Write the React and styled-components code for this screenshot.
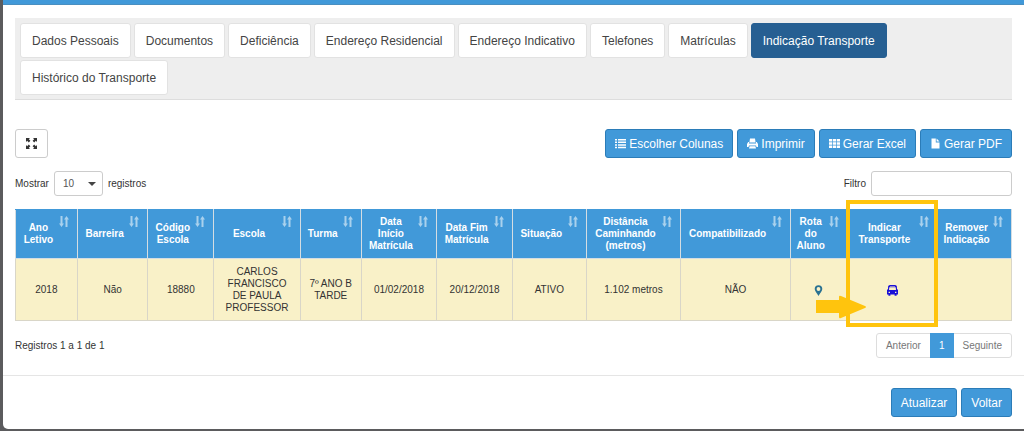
import React, { useState } from "react";
import styled, { createGlobalStyle } from "styled-components";

const GlobalStyle = createGlobalStyle`
  * {
    box-sizing: border-box;
  }

  body {
    margin: 0;
    background: #5b5b5d;
    color: #333;
    font-family: "Liberation Sans", Arial, sans-serif;
    font-size: 10px;
    line-height: 12px;
  }

  button, input, select {
    font-family: inherit;
  }
`;

const Page = styled.div`
  padding: 0 0 2px 3px;
`;

const Modal = styled.div`
  background: #fff;
  border-radius: 0 0 0 5px;
  overflow: hidden;
`;

const ModalHeader = styled.div`
  height: 5px;
  background: #4199d9;
  border-bottom: 1px solid #4a8fc0;
`;

const ModalBody = styled.div`
  padding: 13px 12px 17px;
`;

const ModalFooter = styled.div`
  display: flex;
  justify-content: flex-end;
  gap: 4px;
  padding: 12px;
  border-top: 1px solid #e5e5e5;
`;

const TabList = styled.nav`
  display: flex;
  flex-wrap: wrap;
  gap: 2px 3px;
  padding: 5px 5px 4px;
  margin-bottom: 29px;
  background: #eee;
  border-bottom: 1px solid #ddd;
`;

const Tab = styled.button`
  height: 35px;
  padding: 0 11px;
  border: 1px solid ${(props) => (props.$active ? "#265f92" : "#e2e2e2")};
  border-radius: 3px;
  background: ${(props) => (props.$active ? "#265f92" : "#fff")};
  color: ${(props) => (props.$active ? "#fff" : "#444")};
  font-size: 12px;
  white-space: nowrap;
  cursor: pointer;
`;

const Toolbar = styled.div`
  display: flex;
  align-items: center;
  justify-content: space-between;
  margin-bottom: 13px;
`;

const ButtonGroup = styled.div`
  display: flex;
  gap: 4px;
`;

const Button = styled.button`
  display: flex;
  align-items: center;
  gap: 3px;
  height: 29px;
  padding: 0 9px;
  border: 1px solid #2b7cb8;
  border-radius: 3px;
  background: #4199d9;
  color: #fff;
  font-size: 12px;
  white-space: nowrap;
  cursor: pointer;
`;

const ExpandButton = styled(Button)`
  padding: 0 10px;
  border-color: #ccc;
  background: #fff;
  color: #333;
`;

const Field = styled.label`
  display: flex;
  align-items: center;
  gap: 5px;
`;

const SelectBox = styled.span`
  display: grid;
  align-items: center;

  select, svg {
    grid-area: 1 / 1;
  }

  svg {
    justify-self: end;
    margin-right: 7px;
    pointer-events: none;
  }
`;

const Select = styled.select`
  width: 49px;
  height: 25px;
  padding: 0 8px;
  border: 1px solid #ccc;
  border-radius: 3px;
  background: #fff;
  color: #555;
  font-size: 10px;
  appearance: none;
`;

const FilterInput = styled.input`
  width: 141px;
  height: 25px;
  padding: 0 8px;
  border: 1px solid #ccc;
  border-radius: 3px;
  font-size: 10px;
`;

const TableArea = styled.div`
  position: relative;
  margin-bottom: 12px;
`;

const Table = styled.table`
  width: 100%;
  table-layout: fixed;
  border-collapse: collapse;
  text-align: center;
`;

const Th = styled.th`
  position: relative;
  width: ${(props) => props.$width}%;
  height: 49px;
  padding: 6px 21px 6px 5px;
  border: 1px solid #d5dde2;
  border-top-color: #4199d9;
  background: #4199d9;
  color: #fff;
  font-weight: bold;

  svg {
    position: absolute;
    top: 6px;
    right: 8px;
    opacity: 0.55;
  }
`;

const Td = styled.td`
  height: 62px;
  padding: 6px;
  border: 1px solid #d9d6c8;
  background: #f9f1c8;

  svg {
    vertical-align: middle;
  }
`;

const IconButton = styled.button`
  padding: 0;
  border: 0;
  background: none;
  color: ${(props) => props.$color};
  cursor: pointer;
`;

// destaque em volta da coluna "Indicar Transporte"
const Highlight = styled.div`
  position: absolute;
  top: -9px;
  bottom: -6px;
  left: 83.3%;
  width: 9.3%;
  border: 4px solid #ffc40d;
  pointer-events: none;

  svg {
    position: absolute;
    bottom: 4px;
    left: -34px;
  }
`;

const TableFooter = styled.div`
  display: flex;
  align-items: center;
  justify-content: space-between;
`;

const Pagination = styled.div`
  display: flex;
  border: 1px solid #ddd;
  border-radius: 3px;
`;

const PageButton = styled.button`
  height: 23px;
  padding: 0 9px;
  border: 0;
  background: ${(props) => (props.$active ? "#4199d9" : "transparent")};
  color: ${(props) => (props.$active ? "#fff" : "#777")};
  font-size: 10px;
  box-shadow: ${(props) => (props.$active ? "0 -1px #4199d9, 0 1px #4199d9" : "none")};
  cursor: pointer;
`;

const tabs = [
  "Dados Pessoais",
  "Documentos",
  "Deficiência",
  "Endereço Residencial",
  "Endereço Indicativo",
  "Telefones",
  "Matrículas",
  "Indicação Transporte",
  "Histórico do Transporte",
];

const columns = [
  { name: "Ano Letivo", width: 6.2 },
  { name: "Barreira", width: 7.1 },
  { name: "Código Escola", width: 6.6 },
  { name: "Escola", width: 8.7 },
  { name: "Turma", width: 6.1 },
  { name: "Data Início Matrícula", width: 7.6 },
  { name: "Data Fim Matrícula", width: 7.6 },
  { name: "Situação", width: 7.4 },
  { name: "Distância Caminhando (metros)", width: 9.5 },
  { name: "Compatibilizado", width: 11 },
  { name: "Rota do Aluno", width: 5.7 },
  { name: "Indicar Transporte", width: 9.1 },
  { name: "Remover Indicação", width: 7.4 },
];

const row = [
  "2018",
  "Não",
  "18880",
  "CARLOS FRANCISCO DE PAULA PROFESSOR",
  "7º ANO B TARDE",
  "01/02/2018",
  "20/12/2018",
  "ATIVO",
  "1.102 metros",
  "NÃO",
];

const Icon = ({ children }) => (
  <svg width="11" height="11" viewBox="0 0 11 11" fill="currentColor" aria-hidden="true">
    {children}
  </svg>
);

const ExpandIcon = () => (
  <Icon>
    <path d="M0 0h4L2.8 1.2 4.4 2.8 2.8 4.4 1.2 2.8 0 4zM11 0v4L9.8 2.8 8.2 4.4 6.6 2.8l1.6-1.6L7 0zM0 11V7l1.2 1.2L2.8 6.6 4.4 8.2 2.8 9.8 4 11zM11 11H7l1.2-1.2L6.6 8.2 8.2 6.6l1.6 1.6L11 7z" />
  </Icon>
);

const ListIcon = () => (
  <Icon>
    <path d="M0 1h2v1.5H0zM3 1h8v1.5H3zM0 3.6h2v1.5H0zM3 3.6h8v1.5H3zM0 6.2h2v1.5H0zM3 6.2h8v1.5H3zM0 8.8h2v1.5H0zM3 8.8h8v1.5H3z" />
  </Icon>
);

const PrintIcon = () => (
  <Icon>
    <path d="M3 .5h5l.6 4H2.4z" />
    <path d="M1.2 4h.9l-.2 1.4h7.2L8.9 4h.9L11 6v3H9.5L9 7.4H2L1.5 9H0V6z" />
    <path d="M2.6 8.2h5.8l.6 2.3H2z" />
  </Icon>
);

const GridIcon = () => (
  <Icon>
    <path d="M0 1h3.2v2.5H0zM3.9 1h3.2v2.5H3.9zM7.8 1H11v2.5H7.8zM0 4.3h3.2v2.5H0zM3.9 4.3h3.2v2.5H3.9zM7.8 4.3H11v2.5H7.8zM0 7.6h3.2v2.5H0zM3.9 7.6h3.2v2.5H3.9zM7.8 7.6H11v2.5H7.8z" />
  </Icon>
);

const FileIcon = () => (
  <Icon>
    <path d="M1.5.5H5.8V4.4H9.5V10.5H1.5zM6.6.5 9.5 3.6H6.6z" />
  </Icon>
);

const SortIcon = () => (
  <svg width="10" height="11" viewBox="0 0 10 11" fill="#fff" aria-hidden="true">
    <path d="M1.5 0h2v7.5H5L2.5 11 0 7.5h1.5zM6.5 11h2V3.5H10L7.5 0 5 3.5h1.5z" />
  </svg>
);

const PinIcon = () => (
  <Icon>
    <path
      fillRule="evenodd"
      d="M5.5.2a3.8 3.8 0 0 1 3.8 3.8c0 2-2.3 4-3.8 7C4 8 1.7 6 1.7 4A3.8 3.8 0 0 1 5.5.2zm0 1.9a1.9 1.9 0 1 0 0 3.8 1.9 1.9 0 0 0 0-3.8z"
    />
  </Icon>
);

const BusIcon = () => (
  <Icon>
    <path
      fillRule="evenodd"
      d="M3 0h5q1.700 0 1.900 1.500L10 4.500h1v5H9.600V10.700H7.600V9.500H3.400V10.700H1.400V9.500H0v-5h1L1.100 1.500Q1.300 0 3 0zM3 1.600h5v-.6H3zM2.300 2.200 2 5h7L8.700 2.200zM1.600 6.800v1.100h1.400v-1.100zM8 6.800v1.100h1.400v-1.100z"
    />
  </Icon>
);

const App = () => {
  const [currentTab, setCurrentTab] = useState(7);

  return (
    <Page>
      <GlobalStyle />
      <Modal>
        <ModalHeader />
        <ModalBody>
          <TabList>
            {tabs.map((el, index) => (
              <Tab key={el} $active={index === currentTab} onClick={() => setCurrentTab(index)}>
                {el}
              </Tab>
            ))}
          </TabList>

          <Toolbar>
            <ExpandButton aria-label="Expandir"><ExpandIcon /></ExpandButton>
            <ButtonGroup>
              <Button><ListIcon />Escolher Colunas</Button>
              <Button><PrintIcon />Imprimir</Button>
              <Button><GridIcon />Gerar Excel</Button>
              <Button><FileIcon />Gerar PDF</Button>
            </ButtonGroup>
          </Toolbar>

          <Toolbar>
            <Field>
              Mostrar
              <SelectBox>
                <Select defaultValue="10">
                  <option>10</option>
                  <option>25</option>
                  <option>50</option>
                </Select>
                <svg width="8" height="4" viewBox="0 0 8 4" fill="#444" aria-hidden="true">
                  <path d="M0 0h8L4 4z" />
                </svg>
              </SelectBox>
              registros
            </Field>
            <Field>
              Filtro
              <FilterInput type="text" />
            </Field>
          </Toolbar>

          <TableArea>
            <Table>
              <thead>
                <tr>
                  {columns.map((col) => (
                    <Th key={col.name} $width={col.width}>
                      {col.name}
                      <SortIcon />
                    </Th>
                  ))}
                </tr>
              </thead>
              <tbody>
                <tr>
                  {row.map((value, index) => (
                    <Td key={index}>{value}</Td>
                  ))}
                  <Td>
                    <IconButton $color="#2a7292" aria-label="Rota do Aluno"><PinIcon /></IconButton>
                  </Td>
                  <Td>
                    <IconButton $color="#1a10d8" aria-label="Indicar Transporte"><BusIcon /></IconButton>
                  </Td>
                  <Td />
                </tr>
              </tbody>
            </Table>
            <Highlight>
              <svg width="50" height="24" viewBox="0 0 50 24" fill="#ffc40d" aria-hidden="true">
                <path d="M0 5h23V2q0-2 2-1l24 10q2 1 0 2L25 23q-2 1-2-1v-4H0z" />
              </svg>
            </Highlight>
          </TableArea>

          <TableFooter>
            <span>Registros 1 a 1 de 1</span>
            <Pagination>
              <PageButton>Anterior</PageButton>
              <PageButton $active>1</PageButton>
              <PageButton>Seguinte</PageButton>
            </Pagination>
          </TableFooter>
        </ModalBody>
        <ModalFooter>
          <Button>Atualizar</Button>
          <Button>Voltar</Button>
        </ModalFooter>
      </Modal>
    </Page>
  );
};

export default App;
